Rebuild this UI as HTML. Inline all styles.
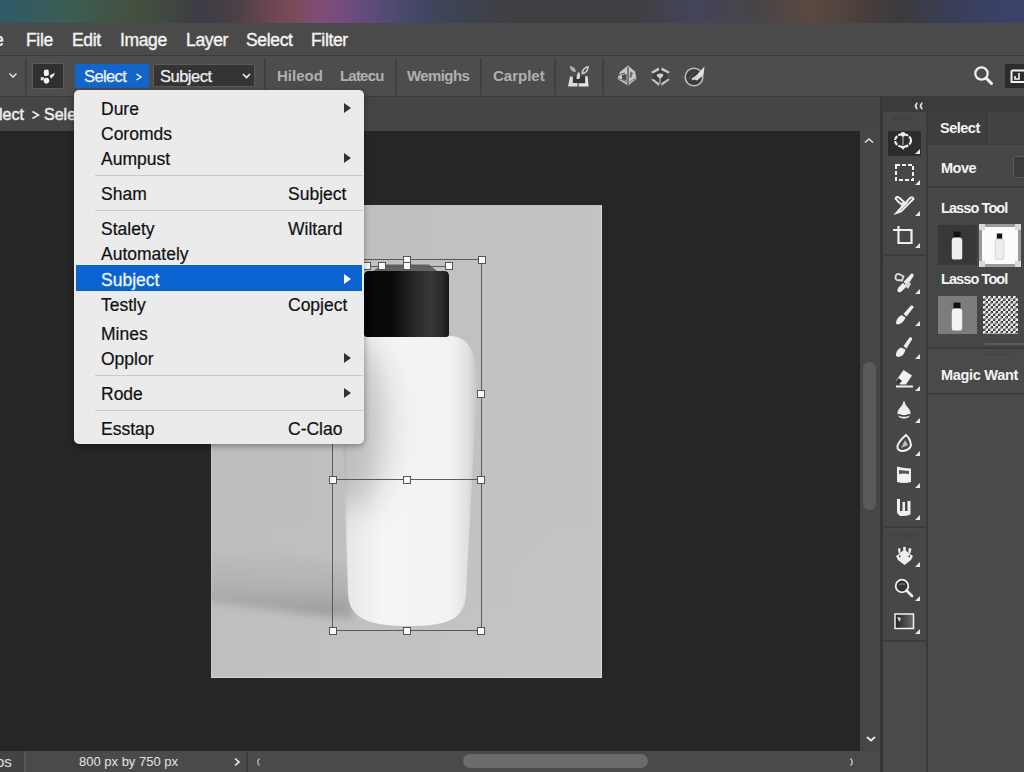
<!DOCTYPE html>
<html><head><meta charset="utf-8">
<style>
*{margin:0;padding:0;box-sizing:border-box}
html,body{width:1024px;height:772px;overflow:hidden;background:#262626;font-family:"Liberation Sans",sans-serif}
.abs{position:absolute}
#top{left:0;top:0;width:1024px;height:23px;background:linear-gradient(90deg,#2f5a68 0px,#3b5d52 70px,#455040 135px,#3f4540 175px,#3c3c44 200px,#4a4048 235px,#6a4550 268px,#7a4a58 292px,#7f4e78 322px,#6e4c80 350px,#554a74 385px,#3f4662 422px,#3d4350 460px,#404044 510px,#404044 640px,#43435a 690px,#484446 760px,#5a4a40 812px,#4a3f3c 860px,#3c3a3c 900px,#3a3e55 945px,#3a4268 1010px)}
#menubar{left:0;top:23px;width:1024px;height:33px;background:#4a4a4a;border-bottom:1px solid #393939}
#menubar span{position:absolute;top:7px;color:#f2f2f2;font-size:17.5px;line-height:20px;letter-spacing:-0.35px;-webkit-text-stroke:0.4px #f2f2f2}
#toolbar{left:0;top:56px;width:1024px;height:41px;background:#4d4d4d;border-bottom:1px solid #3b3b3b}
.vsep{position:absolute;top:2px;width:2px;height:37px;background:#404040}
.tbt{position:absolute;top:11px;color:#b0b0b0;font-size:15px;font-weight:bold;line-height:18px}
#tabbar{left:0;top:97px;width:880px;height:34px;background:#454545}
#canvas{left:0;top:131px;width:860px;height:620px;background:#262626}
#vscroll{left:860px;top:131px;width:20px;height:620px;background:#464646}
#status{left:0;top:751px;width:880px;height:21px;background:#4a4a4a}
#menu{left:74px;top:90px;width:290px;height:354px;background:#ebebeb;border-radius:5px;box-shadow:0 2px 6px rgba(0,0,0,.35)}
.mi{position:absolute;left:27px;font-size:17.5px;color:#111;line-height:20px;-webkit-text-stroke:0.2px #111}
.mr{position:absolute;left:214px;font-size:17.5px;color:#111;line-height:20px;-webkit-text-stroke:0.2px #111}
.sep{position:absolute;left:21px;right:1px;height:1px;background:#c9c9c9}
.arr{position:absolute;left:270px;width:0;height:0;border-left:7px solid #333;border-top:5px solid transparent;border-bottom:5px solid transparent}
.h{position:absolute;width:8px;height:8px;background:#fafafa;border:1px solid #555}
.pt{color:#f4f4f4;font-size:14.5px;font-weight:bold;line-height:17px;white-space:nowrap;letter-spacing:-0.5px}
.ln{position:absolute;background:#5a5a5a}
</style></head>
<body>
<div id="top" class="abs"></div>
<div id="menubar" class="abs">
  <span style="left:-6px">e</span>
  <span style="left:26px">File</span>
  <span style="left:72px">Edit</span>
  <span style="left:120px">Image</span>
  <span style="left:186px">Layer</span>
  <span style="left:246px">Select</span>
  <span style="left:311px">Filter</span>
</div>
<div id="toolbar" class="abs">
  <svg class="abs" style="left:8px;top:16px" width="10" height="7" viewBox="0 0 10 7"><path d="M1.5 1.5 L5 5 L8.5 1.5" stroke="#ddd" stroke-width="1.6" fill="none"/></svg>
  <div class="vsep" style="left:25px"></div>
  <div class="abs" style="left:32px;top:7px;width:32px;height:26px;background:#2f2f2f;border:1px solid #5c5c5c;border-radius:2px"></div>
  <div class="abs" style="left:75px;top:8px;width:74px;height:24px;background:#1465c9"></div>
  <div class="abs" style="left:84px;top:11px;color:#eef4ff;font-size:16.5px;line-height:19px;letter-spacing:-0.6px;-webkit-text-stroke:0.25px #eef4ff">Select</div>
  <svg class="abs" style="left:135px;top:17px" width="8" height="8" viewBox="0 0 8 8"><path d="M1.5 1 L6 4 L1.5 7" stroke="#eef4ff" stroke-width="1.5" fill="none"/></svg>
  <div class="abs" style="left:153px;top:8px;width:102px;height:23px;background:#343434;border:1px solid #5a5a5a;border-radius:2px"></div>
  <div class="abs" style="left:160px;top:11px;color:#f0f0f0;font-size:16.5px;line-height:19px;letter-spacing:-0.5px;-webkit-text-stroke:0.25px #f0f0f0">Subject</div>
  <svg class="abs" style="left:242px;top:17px" width="9" height="6" viewBox="0 0 9 6"><path d="M1 1 L4.5 4.5 L8 1" stroke="#eee" stroke-width="1.6" fill="none"/></svg>
  <div class="vsep" style="left:264px"></div>
  <div class="tbt" style="left:277px">Hileod</div>
  <div class="tbt" style="left:340px;letter-spacing:-0.8px">Latecu</div>
  <div class="vsep" style="left:395px"></div>
  <div class="tbt" style="left:407px;letter-spacing:-0.6px">Wemighs</div>
  <div class="vsep" style="left:480px"></div>
  <div class="tbt" style="left:493px">Carplet</div>
  <div class="vsep" style="left:554px"></div>
  <div class="vsep" style="left:602px"></div>

  <svg class="abs" style="left:566px;top:9px" width="24" height="23" viewBox="0 0 24 23">
    <rect x="7" y="11.5" width="12" height="6.5" fill="#353535"/>
    <path d="M4 11.5 L6.8 11.5 L6.8 18 L11.5 18 L11.5 21.5 L2 21.5 Z" fill="#dcdcdc"/>
    <path d="M19.2 11.2 L21.6 11.2 L22.6 21.5 L12.7 21.5 L12.7 18.2 L19.2 18.2 Z" fill="#e4e4e4"/>
    <path d="M3.5 1 Q9.5 2 9.8 7 Q5 7 3.5 1 Z" fill="#d4d4d4"/>
    <path d="M4.5 2 L9 6.5" stroke="#555" stroke-width="0.8"/>
    <path d="M22 1.8 Q16.5 3 16.3 8.5 Q21.5 8 22 1.8 Z" fill="none" stroke="#d0d0d0" stroke-width="1.5"/>
    <path d="M10.5 14 Q10.5 9 12.8 6.8 Q14.8 9.5 13.5 14 Z" fill="#d8d8d8"/>
  </svg>
  <svg class="abs" style="left:616px;top:8px" width="22" height="23" viewBox="0 0 22 23">
    <path d="M12 1.5 L19 7.5 L20.5 15 L12 21.5 L1.5 15 L4 8 Z" fill="#c8c8c8"/>
    <path d="M12 3 L12 21" stroke="#4a4a4a" stroke-width="1.3"/>
    <path d="M6 11 L10.5 10 L10.5 17 L6 15.5 Z" fill="#4e4e4e"/>
    <path d="M3 11.5 Q6 9 9 9" stroke="#555" stroke-width="1" fill="none"/>
    <path d="M2 14.5 Q7 15.5 11 18.5 M13 18.5 Q17 15.5 20 14.5" stroke="#6a6a6a" stroke-width="0.9" fill="none"/>
    <path d="M14.5 7 L17 9 L15 14 L13.5 13 Z" fill="#6a6a6a"/>
  </svg>
  <svg class="abs" style="left:649px;top:10px" width="23" height="22" viewBox="0 0 23 22">
    <path d="M4 6 L11 2 L18 6 L18 15 L11 19.5 L4 15 Z" fill="#3d3d3d"/>
    <path d="M2 6 L9.5 1.5 L10.5 4 L4 7.5 Z" fill="#cacaca"/>
    <path d="M21 6 L13 1.5 L12 4 L19 7.5 Z" fill="#cacaca"/>
    <path d="M2 13.5 L4.5 13 L10 17 L10 20 Z" fill="#c4c4c4"/>
    <path d="M21 13.5 L18.5 13 L12.5 17 L12.5 20 Z" fill="#c4c4c4"/>
    <path d="M7.5 9 Q11 6.5 14.5 8.5 Q13.5 12 11 12.5 Q8.5 12 7.5 9 Z" fill="#d0d0d0"/>
    <path d="M11 12 L11 18.5" stroke="#a8a8a8" stroke-width="1.4"/>
  </svg>
  <svg class="abs" style="left:683px;top:9px" width="23" height="23" viewBox="0 0 23 23">
    <circle cx="11" cy="12" r="8.8" fill="#3b3b3b" stroke="#bdbdbd" stroke-width="1.6"/>
    <path d="M21.5 1.5 L20.5 10 L14 15.5 L10 14 Z" fill="#e0e0e0"/>
    <path d="M9 14.5 L14.5 11" stroke="#d0d0d0" stroke-width="2.2"/>
    <path d="M6 14 Q8 9 12 7" stroke="#5a5a5a" stroke-width="1" fill="none"/>
  </svg>
  <svg class="abs" style="left:973px;top:9px" width="22" height="22" viewBox="0 0 22 22">
    <circle cx="8.5" cy="8.5" r="6.2" fill="none" stroke="#f2f2f2" stroke-width="2.2"/>
    <path d="M13 13 L18.5 18.5" stroke="#f2f2f2" stroke-width="3" stroke-linecap="round"/>
  </svg>
  <div class="abs" style="left:1005px;top:8px;width:22px;height:24px;background:#2c2c2c;border-radius:2px"></div>
  <svg class="abs" style="left:1010px;top:13px" width="14" height="15" viewBox="0 0 14 15">
    <path d="M1.5 1.5 L14 1.5 M1.5 1.5 L1.5 13 L14 13" fill="none" stroke="#f0f0f0" stroke-width="2"/>
    <path d="M9 4 L9 10 L5 10 L5 7" fill="none" stroke="#f0f0f0" stroke-width="1.6"/>
  </svg>
  <svg class="abs" style="left:38px;top:11px" width="20" height="20" viewBox="0 0 20 20">
    <path d="M6 3.5 Q8 2 10.5 3 L11 7.5 Q9.5 9.5 6.5 9 Q5 6 6 3.5 Z" fill="#f4f4f4"/>
    <path d="M2.5 10.5 L6 10 L5.5 13 L3 13.5 Z" fill="#eaeaea"/>
    <path d="M5.5 13 Q6 10.5 9 10.8 Q11.5 11.5 11.3 14.5 Q10 17 7.5 16.8 Q5.5 16 5.5 13 Z" fill="#f4f4f4"/>
    <path d="M11.5 8.5 L17 5.8 Q16 10 13 11.8 Z" fill="#ececec"/>
  </svg>
</div>
<div id="tabbar" class="abs">
  <div class="abs" style="left:-1px;top:8px;color:#ececec;font-size:16px;line-height:19px;white-space:nowrap;-webkit-text-stroke:0.5px #ececec">lect</div>
  <svg class="abs" style="left:31px;top:13px" width="9" height="10" viewBox="0 0 9 10"><path d="M1.5 1.5 L7.5 5 L1.5 8.5" stroke="#ececec" stroke-width="1.6" fill="none"/></svg>
  <div class="abs" style="left:44px;top:8px;color:#ececec;font-size:16px;line-height:19px;white-space:nowrap;-webkit-text-stroke:0.5px #ececec">Sele</div>
</div>
<div id="canvas" class="abs"></div>
<div id="vscroll" class="abs"></div>
<div id="status" class="abs"></div>

<!-- tools column -->
<div class="abs" style="left:880px;top:96px;width:3px;height:676px;background:#363636"></div>
<div class="abs" style="left:883px;top:96px;width:43px;height:676px;background:#4a4a4a"></div>
<div class="abs" style="left:926px;top:96px;width:2px;height:676px;background:#3a3a3a"></div>
<div class="abs" style="left:883px;top:96px;width:141px;height:16px;background:#3b3b3b"></div>
<svg class="abs" style="left:913px;top:102px" width="10" height="8" viewBox="0 0 10 8"><path d="M4 0.5 Q0 4 4 7.5 L4.2 6 Q2 4 4.2 2 Z M9 0.5 Q5 4 9 7.5 L9.2 6 Q7 4 9.2 2 Z" fill="#f0f0f0" stroke="#f0f0f0" stroke-width="0.6"/></svg>
<div class="abs" style="left:883px;top:112px;width:43px;height:144px;background:#474747;border-bottom:2px solid #3b3b3b"></div>
<div class="abs" style="left:883px;top:257px;width:43px;height:271px;background:#474747;border-bottom:2px solid #3b3b3b"></div>
<div class="abs" style="left:883px;top:530px;width:43px;height:112px;background:#474747;border-bottom:2px solid #3b3b3b"></div>
<div class="abs" style="left:892px;top:117px;width:24px;height:3px;background:repeating-linear-gradient(90deg,#3f3f3f 0 2px,#4a4a4a 2px 3px)"></div>
<div class="abs" style="left:888px;top:131px;width:33px;height:25px;background:#2c2c2c"></div>
<!-- lasso -->
<svg class="abs" style="left:893px;top:131px" width="22" height="20" viewBox="0 0 22 20">
  <ellipse cx="10" cy="9.5" rx="8" ry="6.3" fill="none" stroke="#f0f0f0" stroke-width="2.2" stroke-dasharray="4.5 1.2"/>
  <path d="M10 3.5 L10 14" stroke="#aaa" stroke-width="1.2"/>
  <circle cx="10" cy="3.3" r="2.4" fill="#f0f0f0"/>
  <path d="M7.3 15 L12.7 15 L10 19 Z" fill="#f0f0f0"/>
</svg>
<svg class="abs" style="left:915px;top:149px" width="5" height="5" viewBox="0 0 5 5"><path d="M5 0 L5 5 L0 5 Z" fill="#e6e6e6"/></svg>
<!-- rect marquee -->
<svg class="abs" style="left:893px;top:163px" width="22" height="19" viewBox="0 0 22 19">
  <rect x="3" y="2" width="17" height="15" fill="none" stroke="#f0f0f0" stroke-width="2" stroke-dasharray="4 2"/>
</svg>
<svg class="abs" style="left:915px;top:180px" width="5" height="5" viewBox="0 0 5 5"><path d="M5 0 L5 5 L0 5 Z" fill="#e6e6e6"/></svg>
<!-- pen -->
<svg class="abs" style="left:893px;top:195px" width="22" height="20" viewBox="0 0 22 20">
  <path d="M2.5 3.5 Q3.5 1 6 2.5 L11 7 L8.5 9.5 Q4.5 6.5 2.5 3.5 Z" fill="none" stroke="#f0f0f0" stroke-width="2"/>
  <path d="M3.5 18 L16.5 3.5 Q20 1 20.5 4 L8 16.5 Z" fill="none" stroke="#f0f0f0" stroke-width="2"/>
  <path d="M8.5 12.5 L14 7" stroke="#f0f0f0" stroke-width="2.4"/>
</svg>
<svg class="abs" style="left:915px;top:211px" width="5" height="5" viewBox="0 0 5 5"><path d="M5 0 L5 5 L0 5 Z" fill="#e6e6e6"/></svg>
<!-- crop -->
<svg class="abs" style="left:891px;top:225px" width="24" height="21" viewBox="0 0 24 21">
  <path d="M2 5 L21.5 5 M7.5 1 L7.5 18 L20.5 18 L20.5 4" fill="none" stroke="#f0f0f0" stroke-width="2.2"/>
</svg>
<svg class="abs" style="left:915px;top:243px" width="5" height="5" viewBox="0 0 5 5"><path d="M5 0 L5 5 L0 5 Z" fill="#e6e6e6"/></svg>
<!-- spot heal -->
<svg class="abs" style="left:893px;top:271px" width="22" height="24" viewBox="0 0 22 24">
  <path d="M2.5 6 Q3 2.5 6 3 L10.5 5.5 L9 9.5 L4 9 Q2 8 2.5 6 Z" fill="none" stroke="#dcdcdc" stroke-width="1.8"/>
  <path d="M5 21 Q3.5 19 5.5 16.5 L10 12 L13.5 15.5 L9 20 Q7 22 5 21 Z" fill="#f0f0f0"/>
  <path d="M10.5 11 L18.5 2.5 Q21 2 20.5 5 L14.5 14.5 Z" fill="#f0f0f0"/>
  <path d="M11 14 L15 18 L18 13 L15.5 10 Z" fill="#d6d6d6"/>
</svg>
<svg class="abs" style="left:915px;top:289px" width="5" height="5" viewBox="0 0 5 5"><path d="M5 0 L5 5 L0 5 Z" fill="#e6e6e6"/></svg>
<!-- brush -->
<svg class="abs" style="left:893px;top:303px" width="22" height="23" viewBox="0 0 22 23">
  <path d="M10.5 11 L18 2.5 Q21 2 20.5 4.5 L13.5 13.5 Z" fill="#f0f0f0"/>
  <path d="M3 20.5 Q3 15 8.5 12 L12.5 14.5 Q10.5 20.5 4.5 21.5 Z" fill="#f0f0f0"/>
</svg>
<svg class="abs" style="left:915px;top:321px" width="5" height="5" viewBox="0 0 5 5"><path d="M5 0 L5 5 L0 5 Z" fill="#e6e6e6"/></svg>
<!-- brush2 -->
<svg class="abs" style="left:893px;top:335px" width="22" height="24" viewBox="0 0 22 24">
  <path d="M10.5 11 L16.5 2.5 Q19.5 1.5 19 4.5 L13.5 13.5 Z" fill="#f0f0f0"/>
  <path d="M3 21 Q2.5 15 8 12.5 L12.5 14.5 Q11.5 21 5 22 Z" fill="#f0f0f0"/>
</svg>
<svg class="abs" style="left:915px;top:354px" width="5" height="5" viewBox="0 0 5 5"><path d="M5 0 L5 5 L0 5 Z" fill="#e6e6e6"/></svg>
<!-- eraser -->
<svg class="abs" style="left:893px;top:368px" width="22" height="22" viewBox="0 0 22 22">
  <path d="M10.5 2 L19 7.5 L13 16.5 L7 16.5 L3.5 12 Z" fill="#f0f0f0"/>
  <path d="M5.5 10 Q2.5 13 5.5 16.5 L9 13 Z" fill="#333"/>
  <path d="M3 18.5 L20 18.5" stroke="#f0f0f0" stroke-width="2"/>
</svg>
<svg class="abs" style="left:915px;top:386px" width="5" height="5" viewBox="0 0 5 5"><path d="M5 0 L5 5 L0 5 Z" fill="#e6e6e6"/></svg>
<!-- drop -->
<svg class="abs" style="left:894px;top:399px" width="20" height="22" viewBox="0 0 20 22">
  <path d="M10 1.5 Q11 6 15 10 Q18 14 15 18 Q10 21 5 18 Q2 14 5 10 Q9 6 10 1.5 Z" fill="#f0f0f0"/>
  <path d="M4 15.5 Q10 18.5 16 15.5" stroke="#3a3a3a" stroke-width="1.4" fill="none"/>
</svg>
<svg class="abs" style="left:915px;top:418px" width="5" height="5" viewBox="0 0 5 5"><path d="M5 0 L5 5 L0 5 Z" fill="#e6e6e6"/></svg>
<!-- sharpen drop -->
<svg class="abs" style="left:894px;top:433px" width="20" height="21" viewBox="0 0 20 21">
  <path d="M12 2 Q16 5 17 12 Q16 17 9 18 Q3 18 3.5 13 Q5 8 12 2 Z" fill="none" stroke="#f0f0f0" stroke-width="2"/>
  <path d="M11 7 L7 15 L14 12 Z" fill="#bdbdbd"/>
</svg>
<svg class="abs" style="left:915px;top:451px" width="5" height="5" viewBox="0 0 5 5"><path d="M5 0 L5 5 L0 5 Z" fill="#e6e6e6"/></svg>
<!-- glass -->
<svg class="abs" style="left:894px;top:465px" width="20" height="20" viewBox="0 0 20 20">
  <path d="M3 1.5 Q8 3 17 3.5 L17 17 Q10 19 3 17 Z" fill="#f0f0f0"/>
  <path d="M5 5 L15 6 L15 9 Q10 8 5 9 Z" fill="#555"/>
</svg>
<svg class="abs" style="left:915px;top:483px" width="5" height="5" viewBox="0 0 5 5"><path d="M5 0 L5 5 L0 5 Z" fill="#e6e6e6"/></svg>
<!-- comb -->
<svg class="abs" style="left:894px;top:497px" width="20" height="22" viewBox="0 0 20 22">
  <path d="M3 2 L6 2 L6 14 L8.5 14 L8.5 5 L11 5 L11 14 L13.5 14 L13.5 4 L16.5 4 L16.5 17.5 Q12 19.5 6 19 L3 16 Z" fill="#f0f0f0"/>
</svg>
<svg class="abs" style="left:915px;top:515px" width="5" height="5" viewBox="0 0 5 5"><path d="M5 0 L5 5 L0 5 Z" fill="#e6e6e6"/></svg>
<div class="abs" style="left:892px;top:534px;width:24px;height:3px;background:repeating-linear-gradient(90deg,#3f3f3f 0 2px,#4a4a4a 2px 3px)"></div>
<!-- burn -->
<svg class="abs" style="left:894px;top:546px" width="21" height="21" viewBox="0 0 21 21">
  <path d="M2 10 Q4 9 6 7 L10.5 3.5 L15 7 Q17 9 19 10 L17 14 L10.5 19 L4 14 Z" fill="#f0f0f0"/>
  <path d="M4 3 Q5 1 6.5 3 L6.5 7 L4.5 7 Z M9 1.5 Q10.5 0 12 1.5 L11.5 5 L9.5 5 Z M14.5 3 Q16 1 17.5 3 L16.5 7 L14.5 7 Z" fill="#f0f0f0"/>
  <path d="M5 9 L7 10 L5 12 Z M16 9 L14 10 L16 12 Z" fill="#474747"/>
</svg>
<svg class="abs" style="left:915px;top:562px" width="5" height="5" viewBox="0 0 5 5"><path d="M5 0 L5 5 L0 5 Z" fill="#e6e6e6"/></svg>
<!-- zoom -->
<svg class="abs" style="left:894px;top:578px" width="21" height="21" viewBox="0 0 21 21">
  <circle cx="8" cy="8" r="6.3" fill="#333" stroke="#f0f0f0" stroke-width="1.8"/>
  <path d="M5 7 Q8 5 11 6.5" stroke="#777" stroke-width="1.4" fill="none"/>
  <path d="M12.5 12.5 L18 18" stroke="#f0f0f0" stroke-width="2.6" stroke-linecap="round"/>
</svg>
<svg class="abs" style="left:915px;top:596px" width="5" height="5" viewBox="0 0 5 5"><path d="M5 0 L5 5 L0 5 Z" fill="#e6e6e6"/></svg>
<!-- screen -->
<svg class="abs" style="left:894px;top:613px" width="21" height="17" viewBox="0 0 21 17">
  <defs><linearGradient id="sg" x1="0" y1="0" x2="1" y2="0"><stop offset="0" stop-color="#222"/><stop offset="1" stop-color="#6a6a6a"/></linearGradient></defs>
  <rect x="1" y="1" width="18.5" height="14.5" fill="url(#sg)" stroke="#f0f0f0" stroke-width="1.5"/>
  <path d="M3 4 L7 5 L5.5 9 Z" fill="#e0e0e0"/>
</svg>
<svg class="abs" style="left:915px;top:629px" width="5" height="5" viewBox="0 0 5 5"><path d="M5 0 L5 5 L0 5 Z" fill="#e6e6e6"/></svg>


<!-- panel -->
<div class="abs" style="left:928px;top:112px;width:96px;height:660px;background:#4a4a4a"></div>
<div class="abs" style="left:928px;top:112px;width:96px;height:33px;background:#434343"></div>
<div class="abs" style="left:928px;top:112px;width:59px;height:33px;background:#3e3e3e;border-right:1px solid #393939"></div>
<div class="abs pt" style="left:940px;top:120px">Select</div>
<div class="abs" style="left:928px;top:144px;width:96px;height:44px;background:#474747;border-bottom:2px solid #3c3c3c;border-top:1px solid #3c3c3c"></div>
<div class="abs pt" style="left:941px;top:160px">Move</div>
<div class="abs" style="left:1013px;top:156px;width:15px;height:22px;background:#3b3b3b;border:1px solid #585858;border-radius:2px"></div>
<div class="abs" style="left:928px;top:188px;width:96px;height:161px;background:#464646;border-bottom:2px solid #3a3a3a"></div>
<div class="abs pt" style="left:941px;top:200px;letter-spacing:-0.9px">Lasso Tool</div>
<div class="abs pt" style="left:941px;top:271px;letter-spacing:-0.9px">Lasso Tool</div>
<div class="abs" style="left:985px;top:343px;width:39px;height:2px;background:#5a5a5a"></div>
<div class="abs" style="left:985px;top:353px;width:30px;height:3px;background:repeating-linear-gradient(90deg,#434343 0 2px,#4c4c4c 2px 3px)"></div>
<div class="abs pt" style="left:941px;top:367px;letter-spacing:-0.3px">Magic Want</div>
<div class="abs" style="left:928px;top:393px;width:96px;height:2px;background:#3e3e3e"></div>
<!-- thumbs -->
<div class="abs" style="left:938px;top:225px;width:39px;height:40px;background:#383838"></div>
<div class="abs" style="left:979px;top:224px;width:42px;height:43px;background:#9a9a9a"></div>
<div class="abs" style="left:982px;top:227px;width:36px;height:37px;background:#fbfbfb"></div>
<div class="abs" style="left:979px;top:224px;width:6px;height:6px;background:#d8d8d8"></div>
<div class="abs" style="left:1015px;top:224px;width:6px;height:6px;background:#d8d8d8"></div>
<div class="abs" style="left:979px;top:261px;width:6px;height:6px;background:#d8d8d8"></div>
<div class="abs" style="left:1015px;top:261px;width:6px;height:6px;background:#d8d8d8"></div>
<div class="abs" style="left:938px;top:296px;width:39px;height:38px;background:#7c7c7c"></div>
<div class="abs" style="left:983px;top:296px;width:35px;height:38px;background-color:#eeeeee;background-image:linear-gradient(45deg,#3a3a3a 25%,transparent 25%,transparent 75%,#3a3a3a 75%),linear-gradient(45deg,#3a3a3a 25%,transparent 25%,transparent 75%,#3a3a3a 75%);background-size:5px 5px;background-position:0 0,2.5px 2.5px"></div>
<svg class="abs" style="left:950px;top:231px" width="14" height="29" viewBox="0 0 12 25">
  <rect x="3" y="0.5" width="6" height="5" fill="#111"/>
  <path d="M1.5 8.5 Q1.5 5.5 4 5.5 L8 5.5 Q10.5 5.5 10.5 8.5 L10.5 23 Q10.5 24.5 9 24.5 L3 24.5 Q1.5 24.5 1.5 23 Z" fill="#efefef"/>
</svg>
<svg class="abs" style="left:994px;top:233px" width="11" height="27" viewBox="0 0 10 25">
  <rect x="2.5" y="0.5" width="5" height="5" fill="#111"/>
  <path d="M1 8.5 Q1 5.5 3.5 5.5 L6.5 5.5 Q9 5.5 9 8.5 L9 23 Q9 24.5 7.5 24.5 L2.5 24.5 Q1 24.5 1 23 Z" fill="#eeeeee" stroke="#cfcfcf" stroke-width="0.8"/>
</svg>
<svg class="abs" style="left:950px;top:302px" width="14" height="29" viewBox="0 0 12 25">
  <rect x="3" y="0.5" width="6" height="5" fill="#111"/>
  <path d="M1.5 8.5 Q1.5 5.5 4 5.5 L8 5.5 Q10.5 5.5 10.5 8.5 L10.5 23 Q10.5 24.5 9 24.5 L3 24.5 Q1.5 24.5 1.5 23 Z" fill="#f2f2f2"/>
</svg>

<!-- image -->
<div class="abs" style="left:211px;top:205px;width:391px;height:473px;background:linear-gradient(180deg,rgba(0,0,0,0) 60%,rgba(255,255,255,0.04) 100%),linear-gradient(90deg,#bdbdbd 0%,#c1c1c1 60%,#c3c3c3 100%);border-left:1px solid #cacaca;border-right:1px solid #d8d8d8;border-bottom:1px solid #d8d8d8"></div>
<svg class="abs" style="left:211px;top:205px" width="391" height="473" viewBox="0 0 391 473">
  <defs>
    <linearGradient id="body" x1="0" y1="0" x2="1" y2="0">
      <stop offset="0" stop-color="#cdcdcd"/><stop offset="0.06" stop-color="#e8e8e8"/>
      <stop offset="0.3" stop-color="#f5f5f5"/><stop offset="0.82" stop-color="#f2f2f2"/><stop offset="0.93" stop-color="#e0e0e0"/><stop offset="1" stop-color="#c6c6c6"/>
    </linearGradient>
    <linearGradient id="cap" x1="0" y1="0" x2="1" y2="0">
      <stop offset="0" stop-color="#050505"/><stop offset="0.35" stop-color="#0b0b0b"/>
      <stop offset="0.62" stop-color="#2c2b29"/><stop offset="0.78" stop-color="#3a3836"/><stop offset="0.92" stop-color="#2a2a2a"/><stop offset="1" stop-color="#151515"/>
    </linearGradient>
    <filter id="blur2" x="-50%" y="-50%" width="200%" height="200%"><feGaussianBlur stdDeviation="16"/></filter>
    <filter id="blur" x="-50%" y="-50%" width="200%" height="200%"><feGaussianBlur stdDeviation="4"/></filter>
    <linearGradient id="shg" x1="0" y1="0" x2="0" y2="1"><stop offset="0" stop-color="#8a8a8a" stop-opacity="0"/><stop offset="0.55" stop-color="#8a8a8a" stop-opacity="0.25"/><stop offset="0.88" stop-color="#7a7a7a" stop-opacity="0.5"/><stop offset="1" stop-color="#7a7a7a" stop-opacity="0.15"/></linearGradient>
  </defs>
  <path d="M-5 340 Q70 345 140 360 L142 416 Q70 405 -5 396 Z" fill="url(#shg)" filter="url(#blur)"/>
  <path d="M153 131 L238 131 C261 131 266 152 266 182 L255 388 C254 414 238 421 198 421 C158 421 138 414 137 388 L130 182 C130 152 134 131 153 131 Z" fill="url(#body)"/>
  <clipPath id="bclip"><path d="M153 131 L238 131 C261 131 266 152 266 182 L255 388 C254 414 238 421 198 421 C158 421 138 414 137 388 L130 182 C130 152 134 131 153 131 Z"/></clipPath>
  <g clip-path="url(#bclip)"><ellipse cx="140" cy="220" rx="36" ry="85" fill="#8c8c8c" opacity="0.45" filter="url(#blur2)"/></g>
  <path d="M153 71 Q153 66 158 66 L233 66 Q238 66 238 71 L238 129 Q238 132 235 132 L156 132 Q153 132 153 129 Z" fill="url(#cap)"/>
  <path d="M172 59.5 L218 59.5 L226 66 L162 66 Z" fill="#626262"/>
</svg>
<!-- selection -->
<div class="ln" style="left:364px;top:259px;width:118px;height:1px"></div>
<div class="ln" style="left:364px;top:266px;width:86px;height:1px"></div>
<div class="ln" style="left:481px;top:259px;width:1px;height:372px"></div>
<div class="ln" style="left:332px;top:479px;width:150px;height:1px"></div>
<div class="ln" style="left:332px;top:630px;width:150px;height:1px"></div>
<div class="ln" style="left:332px;top:444px;width:1px;height:187px"></div>
<div class="h" style="left:403px;top:256px"></div>
<div class="h" style="left:478px;top:256px"></div>
<div class="h" style="left:363px;top:262px"></div>
<div class="h" style="left:378px;top:262px"></div>
<div class="h" style="left:403px;top:262px"></div>
<div class="h" style="left:445px;top:262px"></div>
<div class="h" style="left:477px;top:390px"></div>
<div class="h" style="left:329px;top:476px"></div>
<div class="h" style="left:403px;top:476px"></div>
<div class="h" style="left:477px;top:476px"></div>
<div class="h" style="left:329px;top:627px"></div>
<div class="h" style="left:403px;top:627px"></div>
<div class="h" style="left:477px;top:627px"></div>
<!-- vscroll -->
<svg class="abs" style="left:863px;top:136px" width="12" height="8" viewBox="0 0 12 8"><path d="M2 6.5 L6 3 L10 6.5" stroke="#e0e0e0" stroke-width="1.6" fill="none"/></svg>
<div class="abs" style="left:863px;top:362px;width:13px;height:148px;background:#5a5a5a;border-radius:6px"></div>
<svg class="abs" style="left:865px;top:735px" width="12" height="8" viewBox="0 0 12 8"><path d="M2 2 L6 5.5 L10 2" stroke="#e8e8e8" stroke-width="1.8" fill="none"/></svg>
<!-- status -->
<div class="abs" style="left:0;top:751px;width:24px;height:21px;background:#434343"></div><div class="abs" style="left:24px;top:751px;width:2px;height:21px;background:#565656"></div>
<div class="abs" style="left:-4px;top:753px;color:#e0e0e0;font-size:15px;line-height:17px">os</div>
<div class="abs" style="left:79px;top:754px;color:#e4e4e4;font-size:13px;line-height:16px;white-space:nowrap">800 px by 750 px</div>
<svg class="abs" style="left:233px;top:757px" width="8" height="10" viewBox="0 0 8 10"><path d="M2 1.5 L6 5 L2 8.5" stroke="#eee" stroke-width="1.6" fill="none"/></svg>
<div class="abs" style="left:246px;top:751px;width:2px;height:21px;background:#3e3e3e"></div>
<svg class="abs" style="left:254px;top:757px" width="8" height="10" viewBox="0 0 8 10"><path d="M5.5 1.5 Q2 5 5.5 8.5" stroke="#bbb" stroke-width="1.3" fill="none"/></svg>
<div class="abs" style="left:463px;top:754px;width:185px;height:14px;background:#6b6b6b;border-radius:7px"></div>
<svg class="abs" style="left:848px;top:757px" width="8" height="10" viewBox="0 0 8 10"><path d="M2.5 1.5 Q6 5 2.5 8.5" stroke="#ccc" stroke-width="1.3" fill="none"/></svg>

<div id="menu" class="abs">
  <div class="mi" style="top:9px">Dure</div><div class="arr" style="top:13px"></div>
  <div class="mi" style="top:34px">Coromds</div>
  <div class="mi" style="top:59px">Aumpust</div><div class="arr" style="top:63px"></div>
  <div class="sep" style="top:85px"></div>
  <div class="mi" style="top:94px">Sham</div><div class="mr" style="top:94px">Subject</div>
  <div class="sep" style="top:120px"></div>
  <div class="mi" style="top:129px">Stalety</div><div class="mr" style="top:129px">Wiltard</div>
  <div class="mi" style="top:154px">Automately</div>
  <div class="abs" style="left:2px;top:175px;width:286px;height:26px;background:#0b63cf"></div>
  <div class="mi" style="top:180px;color:#eef6ff;-webkit-text-stroke:0.3px #eef6ff">Subject</div><div class="arr" style="top:184px;border-left-color:#fff"></div>
  <div class="mi" style="top:205px">Testly</div><div class="mr" style="top:205px">Copject</div>
  <div class="mi" style="top:234px">Mines</div>
  <div class="mi" style="top:259px">Opplor</div><div class="arr" style="top:263px"></div>
  <div class="sep" style="top:285px"></div>
  <div class="mi" style="top:294px">Rode</div><div class="arr" style="top:298px"></div>
  <div class="sep" style="top:320px"></div>
  <div class="mi" style="top:329px">Esstap</div><div class="mr" style="top:329px">C-Clao</div>
</div>
</body></html>
